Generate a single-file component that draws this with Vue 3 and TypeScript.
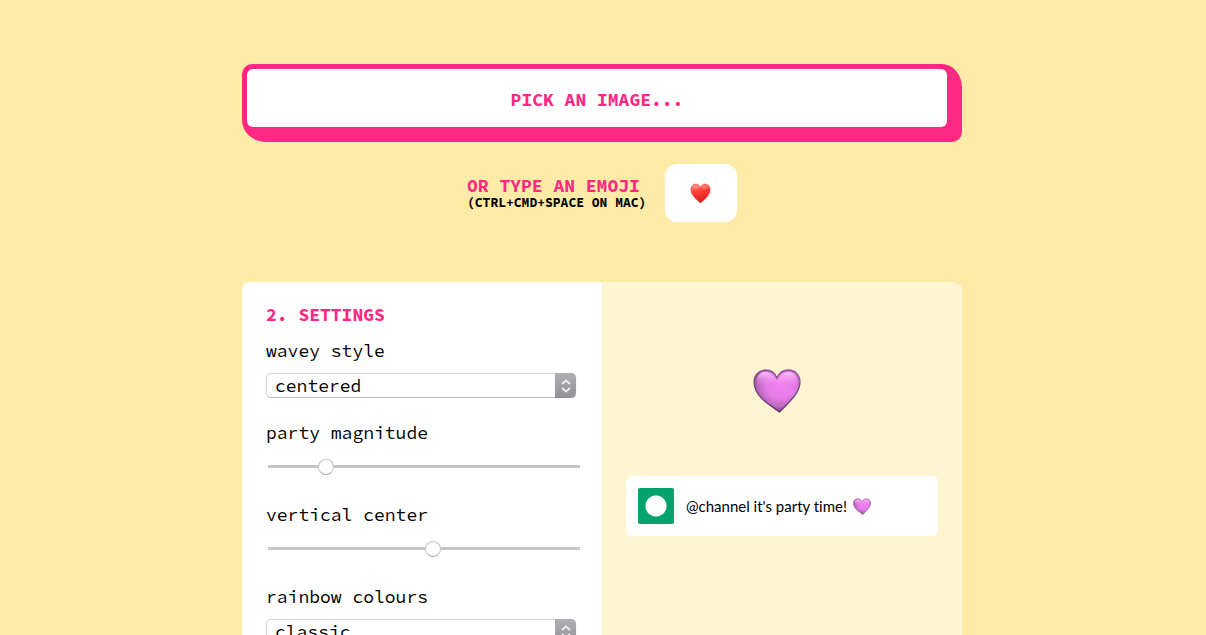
<script setup lang="ts">
import { ref } from 'vue'

const emoji = ref('')
const style = ref('centered')
const magnitude = ref(17)
const center = ref(53)
const colours = ref('classic')
const styles: string[] = ['centered', 'circle', 'bounce']
const palettes: string[] = ['classic', 'pastel', 'neon']
</script>

<template>
  <main class="page">
    <svg class="defs" aria-hidden="true" width="0" height="0">
      <defs>
        <radialGradient id="violet" cx="58%" cy="38%" r="66%">
          <stop offset="0" stop-color="#f080f0" />
          <stop offset="0.45" stop-color="#e87ce8" />
          <stop offset="0.75" stop-color="#b968bc" />
          <stop offset="1" stop-color="#673a6b" />
        </radialGradient>
        <linearGradient id="rim" x1="0" y1="0" x2="0" y2="1">
          <stop offset="0" stop-color="#91559a" />
          <stop offset="1" stop-color="#64346a" />
        </linearGradient>
        <linearGradient id="shine" x1="0" y1="0" x2="0" y2="1">
          <stop offset="0" stop-color="#ffc4ff" stop-opacity="0.95" />
          <stop offset="1" stop-color="#f38ff5" stop-opacity="0" />
        </linearGradient>
        <linearGradient id="red" x1="0.3" y1="0" x2="0.6" y2="1">
          <stop offset="0" stop-color="#ff7468" />
          <stop offset="0.45" stop-color="#fa3a31" />
          <stop offset="1" stop-color="#d51c18" />
        </linearGradient>
        <symbol id="violet-heart" viewBox="0 0 48 44">
          <path d="M26.500 43C22 39 1 29 1 13C1 6 6 1 12.500 1C18 1 22 4 24 9C26 4 30 1 35.500 1C42 1 47 6 47 13C47 25 33 36 26.500 43Z" fill="url(#violet)" stroke="url(#rim)" stroke-width="1.300" />
          <path d="M3.500 15C3 7 7 3 12.500 3C18 3 21 7 24 12C27 7 30 3 35.500 3C41 3 45 7 44.500 15C39 19 32 14 24 17C16 14 9 19 3.500 15Z" fill="url(#shine)" />
        </symbol>
      </defs>
    </svg>

    <button class="pick" type="button"><span class="pick-face">PICK AN IMAGE...</span></button>

    <div class="emoji-row">
      <label class="emoji-label" for="emoji">
        <span class="title">OR TYPE AN EMOJI</span>
        <span class="hint">(CTRL+CMD+SPACE ON MAC)</span>
      </label>
      <div class="emoji-box">
        <input id="emoji" v-model="emoji" class="emoji-input" type="text" />
        <svg v-if="!emoji" class="red-heart" viewBox="0 0 48 48" aria-hidden="true">
          <path d="M24 46C19 41 2 30 2 15C2 7 7 2 13 2C18 2 22 5 24 10C26 5 30 2 35 2C41 2 46 7 46 15C46 30 29 41 24 46Z" fill="url(#red)" stroke="#d93a30" stroke-width="1" />
          <ellipse cx="13" cy="9" rx="8" ry="5" fill="#ffaaa0" opacity="0.4" />
          <ellipse cx="35" cy="9" rx="8" ry="5" fill="#ffaaa0" opacity="0.35" />
        </svg>
      </div>
    </div>

    <section class="card">
      <form class="settings" @submit.prevent>
        <h2 class="title">2. SETTINGS</h2>
        <div class="field">
          <label for="style">wavey style</label>
          <div class="select">
            <select id="style" v-model="style">
              <option v-for="s in styles" :key="s">{{ s }}</option>
            </select>
            <span class="stepper"><svg viewBox="0 0 12 16" aria-hidden="true"><path d="M2 6L6 2.500L10 6M2 10L6 13.500L10 10" /></svg></span>
          </div>
        </div>
        <div class="field">
          <label for="magnitude">party magnitude</label>
          <input id="magnitude" v-model="magnitude" class="range" type="range" min="0" max="100" />
        </div>
        <div class="field">
          <label for="center">vertical center</label>
          <input id="center" v-model="center" class="range" type="range" min="0" max="100" />
        </div>
        <div class="field">
          <label for="colours">rainbow colours</label>
          <div class="select">
            <select id="colours" v-model="colours">
              <option v-for="p in palettes" :key="p">{{ p }}</option>
            </select>
            <span class="stepper"><svg viewBox="0 0 12 16" aria-hidden="true"><path d="M2 6L6 2.500L10 6M2 10L6 13.500L10 10" /></svg></span>
          </div>
        </div>
      </form>

      <div class="preview">
        <svg class="big-heart" aria-hidden="true"><use href="#violet-heart" /></svg>
        <div class="message">
          <span class="avatar"></span>
          <span>@channel it's party time!</span>
          <svg class="small-heart" aria-hidden="true"><use href="#violet-heart" /></svg>
        </div>
      </div>
    </section>
  </main>
</template>

<style>
body {
  background: #ffeba8;
}
</style>

<style scoped>
.page,
.page * {
  box-sizing: border-box;
}
.page {
  max-width: 722px;
  height: 100vh;
  min-height: 400px;
  margin: 0 auto;
  padding: 64px 2px 0 0;
  overflow: hidden;
  font: 18px/24px "Source Code Pro", "Liberation Mono", monospace;
  color: #000;
}
.defs {
  display: block;
}
.pick {
  display: block;
  width: 100%;
  padding: 5px 15px 15px 5px;
  border: 0;
  border-radius: 10px 20px 10px 24px / 10px 24px 10px 22px;
  background: #ff2882;
  color: #ff2882;
  font: inherit;
  font-weight: 700;
  cursor: pointer;
}
.pick-face {
  display: block;
  padding: 19px 0 15px;
  border-radius: 6px;
  background: #fff;
}
.emoji-row {
  display: flex;
  justify-content: center;
  align-items: center;
  gap: 12px;
  margin: 22px 0 60px;
}
.emoji-label {
  min-width: 186px;
  padding-top: 2px;
}
.emoji-label span {
  display: block;
}
.title {
  margin: 0;
  color: #ff2882;
  font-size: 18px;
  font-weight: 700;
  line-height: 18px;
}
.hint {
  font-size: 13px;
  font-weight: 700;
  line-height: 16px;
}
.emoji-box {
  position: relative;
  width: 72px;
  height: 58px;
}
.emoji-input {
  width: 100%;
  height: 100%;
  padding: 0;
  border: 0;
  border-radius: 12px;
  background: #fff;
  font: inherit;
  text-align: center;
}
.red-heart {
  position: absolute;
  top: 19px;
  left: 25px;
  width: 21px;
  height: 21px;
  pointer-events: none;
}
.card {
  display: grid;
  grid-template-columns: 1fr 1fr;
  overflow: hidden;
  border-radius: 8px;
  background: #fff5d3;
}
.settings {
  display: flex;
  flex-direction: column;
  padding: 24px 24px 40px;
  background: #fff;
}
.field {
  height: 82px;
}
.title + .field {
  margin-top: 15px;
}
.field label {
  display: block;
  margin-bottom: 10px;
}
.select {
  position: relative;
  height: 25px;
  margin-right: 2px;
}
.select select {
  display: block;
  width: 100%;
  height: 100%;
  padding: 0 28px 0 8px;
  border: 1px solid #d6d6d6;
  border-bottom-color: #bcbcbc;
  border-radius: 5px;
  box-shadow: 0 0 1px #d8d8d8;
  background: #fff;
  color: #000;
  font: inherit;
  appearance: none;
}
.stepper {
  position: absolute;
  top: 0;
  right: 0;
  bottom: 0;
  display: flex;
  align-items: center;
  justify-content: center;
  width: 21px;
  border-radius: 0 5px 5px 0;
  background: linear-gradient(#b0afb3, #929196);
  pointer-events: none;
}
.stepper svg {
  width: 12px;
  height: 16px;
  fill: none;
  stroke: #ededee;
  stroke-width: 2;
}
.range {
  display: block;
  width: 100%;
  height: 23px;
  margin: 0 2px;
  background: linear-gradient(#c6c6c6, #c6c6c6) center / 100% 3px no-repeat;
  appearance: none;
}
.range::-webkit-slider-thumb {
  width: 16px;
  height: 16px;
  border: 1px solid #c4c4c4;
  border-bottom-color: #aaa;
  border-radius: 50%;
  background: #fff;
  appearance: none;
}
.preview {
  display: flex;
  flex-direction: column;
  padding: 87px 24px 24px;
}
.big-heart {
  align-self: center;
  width: 48px;
  height: 44px;
  margin-right: 10px;
}
.message {
  display: flex;
  align-items: center;
  gap: 12px;
  margin-top: 63px;
  padding: 12px;
  border-radius: 6px;
  background: #fff;
  font: 15px/20px Lato, sans-serif;
  font-variant-ligatures: none;
}
.avatar {
  width: 36px;
  height: 36px;
  border-radius: 2px;
  background: radial-gradient(circle, #fff 10px, #04a36d 11px);
}
.small-heart {
  width: 18px;
  height: 17px;
  margin-left: -6px;
}
</style>
